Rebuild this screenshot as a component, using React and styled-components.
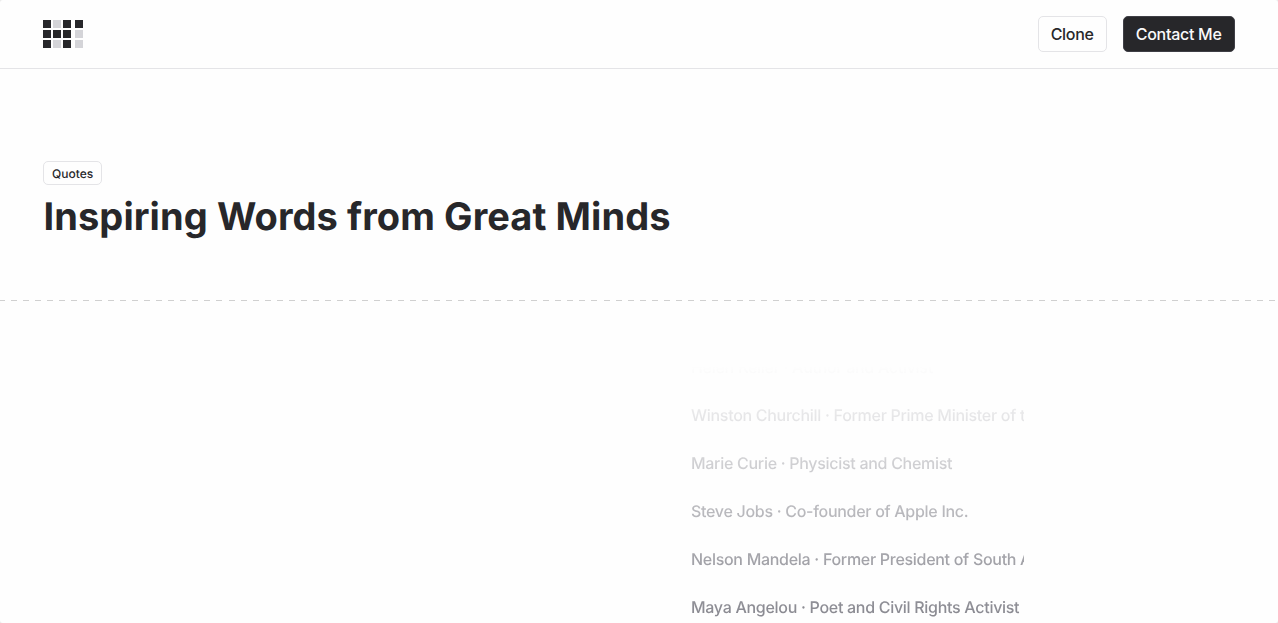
import React from 'react'
import styled, { createGlobalStyle } from 'styled-components'

const authors = [
  { name: 'Helen Keller', role: 'Author and Activist' },
  { name: 'Winston Churchill', role: 'Former Prime Minister of the United Kingdom' },
  { name: 'Marie Curie', role: 'Physicist and Chemist' },
  { name: 'Steve Jobs', role: 'Co-founder of Apple Inc.' },
  { name: 'Nelson Mandela', role: 'Former President of South Africa' },
  { name: 'Maya Angelou', role: 'Poet and Civil Rights Activist' },
]

// x, y, lit
const tiles = [
  [0, 0, 1], [10, 0, 0], [20, 0, 1], [32, 0, 1],
  [0, 10, 1], [10, 10, 1], [20, 10, 1], [32, 10, 0],
  [0, 20, 1], [10, 20, 0], [20, 20, 1], [32, 20, 0],
]

const Logo = () => (
  <svg width='40' height='28' viewBox='0 0 40 28' shapeRendering='crispEdges'>
    {tiles.map(([x, y, lit]) => (
      <rect
        key={`${x}-${y}`}
        x={x}
        y={y}
        width='8'
        height='8'
        fill={lit ? '#27272a' : '#d4d4d8'}
      />
    ))}
  </svg>
)

const App = () => {
  return (
    <>
      <GlobalStyle />
      <Page>
        <Header>
          <Logo />
          <Actions>
            <Button>Clone</Button>
            <Button $primary>Contact Me</Button>
          </Actions>
        </Header>
        <Hero>
          <Tag>Quotes</Tag>
          <Title>Inspiring Words from Great Minds</Title>
        </Hero>
        <Divider />
        <Quotes>
          <AuthorList>
            {authors.map(({ name, role }) => (
              <Author key={name}>
                {name} · {role}
              </Author>
            ))}
          </AuthorList>
        </Quotes>
      </Page>
    </>
  )
}

const GlobalStyle = createGlobalStyle`
  * {
    box-sizing: border-box;
  }
  body {
    margin: 0;
    background: #ebebeb;
    color: #27272a;
    font-family: Inter, 'Liberation Sans', sans-serif;
    -webkit-font-smoothing: antialiased;
    text-rendering: geometricPrecision;
  }
`

const Page = styled.main`
  display: flex;
  flex-direction: column;
  height: 100vh;
  overflow: hidden;
  background: #fefefe;
  border-radius: 3px;
`

const Header = styled.header`
  flex: none;
  display: flex;
  align-items: center;
  justify-content: space-between;
  height: 69px;
  padding: 0 43px;
  border-bottom: 1px solid #e4e4e7;
`

const Actions = styled.nav`
  display: flex;
  gap: 16px;
`

const Button = styled.button`
  height: 36px;
  padding: 0 12.5px 0 11.5px;
  border: 1px solid ${({ $primary }) => ($primary ? '#3f3f46' : '#e4e4e7')};
  border-radius: 5px;
  background: ${({ $primary }) => ($primary ? '#27272a' : '#fefefe')};
  color: ${({ $primary }) => ($primary ? '#fafafa' : '#27272a')};
  font-family: inherit;
  font-size: 16px;
  font-weight: 500;
  line-height: 24px;
  letter-spacing: -0.28px;
`

const Hero = styled.section`
  flex: none;
  display: flex;
  flex-direction: column;
  align-items: flex-start;
  gap: 8px;
  height: 231px;
  padding: 92px 43px 0;
`

const Tag = styled.span`
  height: 24px;
  padding: 0 8px;
  border: 1px solid #e4e4e7;
  border-radius: 5px;
  font-size: 12px;
  font-weight: 500;
  line-height: 24px;
`

const Title = styled.h1`
  margin: 0;
  padding-left: 0.5px;
  font-size: 38px;
  font-weight: 700;
  line-height: 48px;
  letter-spacing: 0.08px;
  white-space: nowrap;
`

const Divider = styled.div`
  flex: none;
  height: 1px;
  background: repeating-linear-gradient(
      to right,
      #d0d0d0 0 6.048px,
      transparent 6.048px 12.096px
    )
    -1.3px 0 / 1300px 1px no-repeat;
`

const Quotes = styled.section`
  flex: 1;
  min-height: 0;
  display: flex;
  padding: 66px 254px 0 691px;
`

const AuthorList = styled.ul`
  flex: 1;
  display: flex;
  flex-direction: column;
  gap: 24px;
  height: 480px;
  margin: 0;
  padding: 0;
  overflow: hidden;
  list-style: none;
  mask-image: linear-gradient(to bottom, rgba(0, 0, 0, 0.005), #000 300px);
`

const Author = styled.li`
  flex: none;
  height: 24px;
  margin-top: -12px;
  margin-bottom: 12px;
  color: #71717a;
  font-size: 16px;
  font-weight: 500;
  line-height: 24px;
  letter-spacing: -0.29px;
  white-space: nowrap;
`

export default App
